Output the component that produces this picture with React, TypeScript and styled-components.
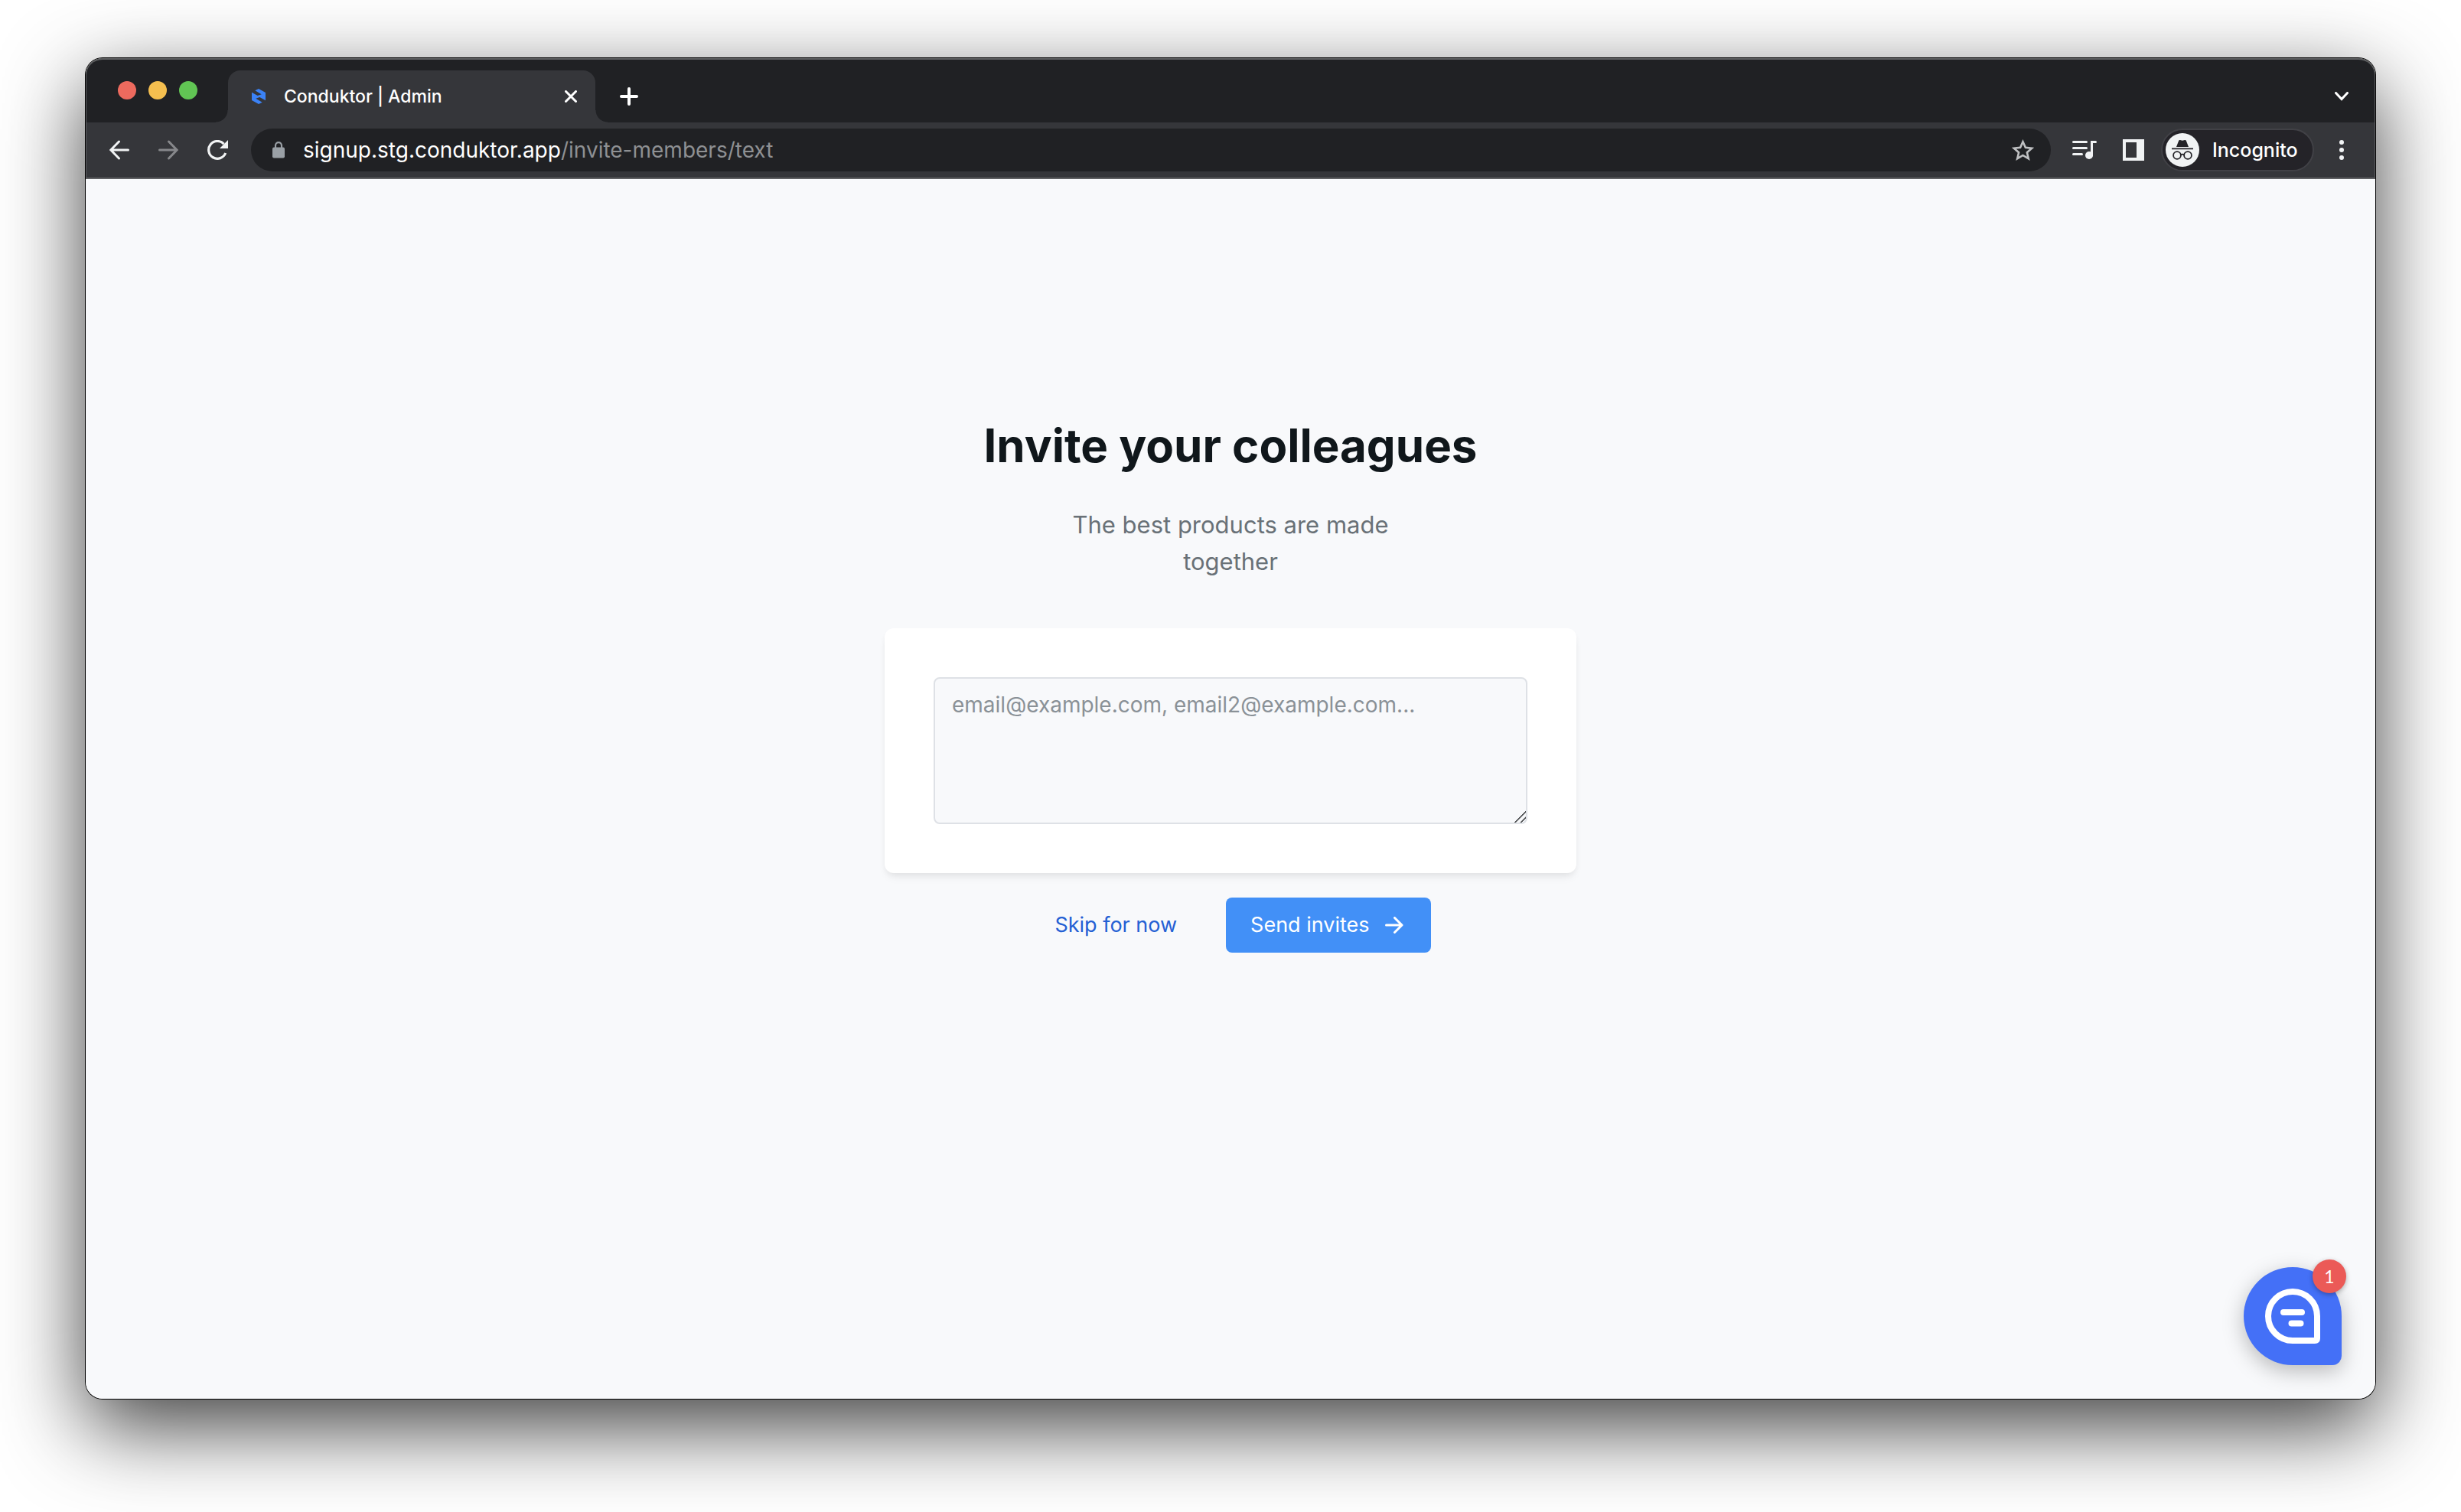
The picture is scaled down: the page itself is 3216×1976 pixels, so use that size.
import React from 'react';
import styled, { createGlobalStyle } from 'styled-components';

const GlobalStyle = createGlobalStyle`
  *, *::before, *::after { box-sizing: border-box; }
  body {
    margin: 0;
    background: #ffffff;
    font-family: Inter, "Liberation Sans", sans-serif;
  }
  button, textarea { font-family: inherit; }
  svg { display: block; flex: none; }
`;

const Desktop = styled.div`
  display: flex;
  min-height: 100vh;
  padding: 76px 112px 148px;
`;

const Window = styled.div`
  position: relative;
  flex: 1;
  display: flex;
  flex-direction: column;
  min-width: 0;
  border-radius: 22px;
  overflow: clip;
  background: #f8f9fb;
`;

const WindowShadow = styled.div`
  flex: 1;
  display: flex;
  min-width: 0;
  border-radius: 22px;
  box-shadow: 0 0 0 1px #000000, 0 36px 110px rgba(0, 0, 0, 0.76);
`;

const Chrome = styled.header`
  position: relative;
  &::after {
    content: '';
    position: absolute;
    inset: 0;
    border: solid #5f6062;
    border-width: 2px 1px 0;
    border-radius: 22px 22px 0 0;
    pointer-events: none;
  }
`;

const TabStrip = styled.div`
  display: flex;
  align-items: center;
  height: 84px;
  padding: 0 35px 0 42px;
  background: #202124;
`;

const TrafficLights = styled.div`
  display: flex;
  gap: 16px;
  margin-right: 40px;
`;

const Light = styled.button<{ $color: string }>`
  width: 24px;
  height: 24px;
  padding: 0;
  border: 0;
  border-radius: 50%;
  background: ${(p) => p.$color};
`;

const TabRow = styled.div`
  flex: 1;
  align-self: flex-end;
  display: flex;
  align-items: center;
  height: 68px;
`;

const Tab = styled.div`
  position: relative;
  display: flex;
  align-items: center;
  gap: 24px;
  width: 480px;
  height: 68px;
  margin-right: 32px;
  padding: 0 24px 0 31px;
  border-radius: 16px 16px 0 0;
  background: #35363a;
  color: #ffffff;
  font-size: 23px;
  line-height: 32px;
  &::before, &::after {
    content: '';
    position: absolute;
    bottom: 0;
    width: 16px;
    height: 16px;
  }
  &::before {
    right: 100%;
    background: radial-gradient(circle at 0 0, transparent 15px, #35363a 16px);
  }
  &::after {
    left: 100%;
    background: radial-gradient(circle at 100% 0, transparent 15px, #35363a 16px);
  }
`;

const TabTitle = styled.span`
  flex: 1;
  font-weight: 500;
  white-space: nowrap;
`;

const IconButton = styled.button<{ $tone?: string; $after?: number }>`
  display: flex;
  flex: none;
  margin: 0 ${(p) => p.$after ?? 0}px 0 0;
  padding: 0;
  border: 0;
  background: none;
  color: ${(p) => p.$tone ?? '#f1f3f4'};
`;

const Spacer = styled.div`
  flex: 1;
`;

const Toolbar = styled.div`
  display: flex;
  align-items: center;
  height: 74px;
  padding: 0 41px 0 31px;
  border-bottom: 2px solid #5f6063;
  background: #35363a;
`;

const Omnibox = styled.div`
  flex: 1;
  display: flex;
  align-items: center;
  min-width: 0;
  height: 56px;
  margin-right: 28px;
  padding: 0 22px 0 28px;
  border-radius: 28px;
  background: #202124;
`;

const Address = styled.button`
  flex: 1;
  margin-left: 24px;
  padding: 0;
  border: 0;
  background: none;
  color: #8e9093;
  font-size: 28px;
  line-height: 40px;
  text-align: left;
  white-space: nowrap;
`;

const Domain = styled.span`
  color: #ffffff;
`;

const Profile = styled.button`
  display: flex;
  align-items: center;
  gap: 17px;
  width: 200px;
  height: 56px;
  margin: 0 33px 0 22px;
  padding: 0 4px;
  border: 2px solid #414146;
  border-radius: 28px;
  background: #242328;
  color: #ffffff;
  font-size: 25px;
  line-height: 32px;
  font-weight: 500;
`;

const Page = styled.main`
  flex: 1;
  display: flex;
  flex-direction: column;
  align-items: center;
  padding: 308px 32px 64px;
`;

const Title = styled.h1`
  margin: 0 0 40px;
  color: #10171b;
  font-size: 60px;
  line-height: 80px;
  font-weight: 700;
  text-align: center;
`;

const Subtitle = styled.p`
  max-width: 448px;
  margin: 0 0 63px;
  color: #697177;
  font-size: 31px;
  line-height: 48px;
  text-align: center;
`;

const Form = styled.form`
  width: 100%;
  max-width: 904px;
`;

const Card = styled.div`
  padding: 64px;
  border-radius: 12px;
  background: #ffffff;
  box-shadow: 0 8px 12px -2px rgba(0, 0, 0, 0.05), 0 4px 8px -2px rgba(0, 0, 0, 0.06);
`;

const Emails = styled.textarea`
  display: block;
  width: 100%;
  height: 192px;
  padding: 14px 22px;
  border: 2px solid #dee1e6;
  border-radius: 8px;
  outline: 0;
  background: #f8f9fb;
  color: #10171b;
  font-size: 28px;
  line-height: 40px;
  resize: both;
  &::placeholder { color: #8a9197; opacity: 1; }
  &::-webkit-resizer {
    background: linear-gradient(
      135deg,
      transparent 49%, #4f5153 50%, #4f5153 56%,
      transparent 57%, transparent 73%,
      #4f5153 74%, #4f5153 80%, transparent 81%
    );
  }
`;

const Actions = styled.div`
  display: flex;
  justify-content: center;
  gap: 32px;
  margin-top: 32px;
`;

const ActionButton = styled.button<{ $primary?: boolean }>`
  display: flex;
  align-items: center;
  gap: 20px;
  height: 72px;
  padding: 0 ${(p) => (p.$primary ? 36 : 32)}px 0 32px;
  border: 0;
  border-radius: 8px;
  background: ${(p) => (p.$primary ? '#4290f7' : 'transparent')};
  color: ${(p) => (p.$primary ? '#ffffff' : '#2460d4')};
  font-size: 27px;
  line-height: 40px;
`;

const Chat = styled.button`
  position: absolute;
  right: 44px;
  bottom: 44px;
  display: grid;
  place-items: center;
  width: 128px;
  height: 128px;
  padding: 0;
  border: 0;
  border-radius: 64px 64px 12px 64px;
  background: #4470f7;
  box-shadow: 0 8px 28px rgba(0, 0, 0, 0.26);
`;

const Badge = styled.span`
  position: absolute;
  top: -10px;
  right: -6px;
  width: 44px;
  height: 44px;
  border-radius: 50%;
  background: #eb5a57;
  box-shadow: 0 2px 6px rgba(0, 0, 0, 0.3);
  color: #ffffff;
  font-family: Lato, sans-serif;
  font-size: 23px;
  line-height: 44px;
  text-align: center;
`;

const Favicon = () => (
  <svg width="18" height="20" viewBox="0 0 54 60" fill="#3b82f6" aria-hidden="true">
    <path d="M13 7 27 0 54 15V46L31 33 16 38 41 53 27 60 0 45V14L23 27 38 22Z" />
  </svg>
);

const Close = () => (
  <svg width="16" height="16" viewBox="0 0 16 16" stroke="currentColor" strokeWidth="3" strokeLinecap="round">
    <path d="M1.5 1.5 14.5 14.5M14.5 1.5 1.5 14.5" />
  </svg>
);

const Plus = () => (
  <svg width="24" height="24" viewBox="0 0 24 24" stroke="currentColor" strokeWidth="4" strokeLinecap="round">
    <path d="M12 2V22M2 12H22" />
  </svg>
);

const Chevron = () => (
  <svg width="18" height="12" viewBox="0 0 18 12" fill="none" stroke="currentColor" strokeWidth="3" strokeLinecap="round">
    <path d="M1.5 1.5 9 9.5 16.5 1.5" />
  </svg>
);

const Back = () => (
  <svg width="26" height="26" viewBox="0 0 26 26" fill="none" stroke="currentColor" strokeWidth="3" strokeLinecap="round">
    <path d="M24.5 13H2M12.5 2 1.8 13 12.5 24" />
  </svg>
);

const Forward = () => (
  <svg width="26" height="26" viewBox="0 0 26 26" fill="none" stroke="currentColor" strokeWidth="3" strokeLinecap="round">
    <path d="M1.5 13H24M13.5 2 24.2 13 13.5 24" />
  </svg>
);

const Reload = () => (
  <svg width="27" height="26" viewBox="0 0 27 26">
    <path d="M23.7 17A11.4 11.4 0 1 1 21.5 5.2" fill="none" stroke="currentColor" strokeWidth="3.2" />
    <path d="M27 0V11H16Z" fill="currentColor" />
  </svg>
);

const Lock = () => (
  <svg width="16" height="22" viewBox="0 0 16 22" aria-hidden="true">
    <path d="M4 9V5.200a4 4 0 0 1 8 0V9" fill="none" stroke="#9aa0a6" strokeWidth="2.200" />
    <rect y="7.500" width="16" height="14" rx="2" fill="#9aa0a6" />
  </svg>
);

const Star = () => (
  <svg width="29" height="29" viewBox="0 0 29 29" fill="none" stroke="currentColor" strokeWidth="2.600">
    <path d="M14.500 3.200 17.900 10.900 26.200 11.700 19.900 17.200 21.800 25.400 14.500 21 7.200 25.400 9.100 17.200 2.800 11.700 11.100 10.900Z" />
  </svg>
);

const Queue = () => (
  <svg width="32" height="24" viewBox="0 0 32 24" stroke="currentColor" strokeWidth="3" strokeLinecap="round" fill="none">
    <path d="M1.500 1.500H18.500M1.500 9.500H18.500M1.500 17.500H12.500" />
    <path d="M25.500 19V1.500H30.500" />
    <circle cx="22" cy="19" r="5" fill="currentColor" stroke="none" />
  </svg>
);

const SidePanel = () => (
  <svg width="28" height="28" viewBox="0 0 28 28" fill="currentColor" fillRule="evenodd">
    <path d="M0 0H28V28H0ZM4 4V24H18V4Z" />
  </svg>
);

const Incognito = () => (
  <svg width="44" height="44" viewBox="0 0 44 44" aria-hidden="true">
    <circle cx="22" cy="22" r="22" fill="#f1f3f4" />
    <path d="M14 18 17.200 9.800Q17.700 8.600 19 9L22 9.800 25 9Q26.300 8.600 26.800 9.800L30 18Z" fill="#242328" />
    <g fill="none" stroke="#242328" strokeWidth="1.800">
      <path d="M8 20.300H36M19.800 28.400Q22 26.800 24.200 28.400" />
      <circle cx="15" cy="29" r="4.900" />
      <circle cx="29" cy="29" r="4.900" />
    </g>
  </svg>
);

const Dots = () => (
  <svg width="6" height="26" viewBox="0 0 6 26" fill="currentColor">
    <circle cx="3" cy="3" r="3" />
    <circle cx="3" cy="13" r="3" />
    <circle cx="3" cy="23" r="3" />
  </svg>
);

const SendArrow = () => (
  <svg width="24" height="22" viewBox="0 0 24 22" fill="none" stroke="currentColor" strokeWidth="3" strokeLinecap="round" strokeLinejoin="round" aria-hidden="true">
    <path d="M1.500 11H22M12.500 1.500 22 11 12.500 20.500" />
  </svg>
);

const ChatIcon = () => (
  <svg width="72" height="72" viewBox="0 0 72 72" fill="none" stroke="#ffffff" strokeWidth="8" strokeLinecap="round" aria-hidden="true">
    <path d="M36 4A32 32 0 0 1 68 36V65Q68 68 65 68H36A32 32 0 0 1 36 4Z" />
    <path d="M24 31H48M34.500 45.500H46.500" />
  </svg>
);

export default function App() {
  return (
    <>
      <GlobalStyle />
      <Desktop>
        <WindowShadow>
          <Window>
            <Chrome>
              <TabStrip>
                <TrafficLights>
                  <Light $color="#ed6a5e" aria-label="Close window" />
                  <Light $color="#f5bf4f" aria-label="Minimize window" />
                  <Light $color="#61c554" aria-label="Zoom window" />
                </TrafficLights>
                <TabRow>
                  <Tab>
                    <Favicon />
                    <TabTitle>Conduktor | Admin</TabTitle>
                    <IconButton $tone="#ffffff" aria-label="Close tab"><Close /></IconButton>
                  </Tab>
                  <IconButton $tone="#ffffff" aria-label="New tab"><Plus /></IconButton>
                  <Spacer />
                  <IconButton $tone="#ffffff" aria-label="Search tabs"><Chevron /></IconButton>
                </TabRow>
              </TabStrip>
              <Toolbar>
                <IconButton $after={38} aria-label="Back"><Back /></IconButton>
                <IconButton $after={38} $tone="#87888b" aria-label="Forward"><Forward /></IconButton>
                <IconButton $after={30} aria-label="Reload"><Reload /></IconButton>
                <Omnibox>
                  <Lock />
                  <Address>
                    <Domain>signup.stg.conduktor.app</Domain>/invite-members/text
                  </Address>
                  <IconButton $tone="#bfc0c2" aria-label="Bookmark this page"><Star /></IconButton>
                </Omnibox>
                <IconButton $after={34} aria-label="Media controls"><Queue /></IconButton>
                <IconButton aria-label="Side panel"><SidePanel /></IconButton>
                <Profile><Incognito />Incognito</Profile>
                <IconButton aria-label="Menu"><Dots /></IconButton>
              </Toolbar>
            </Chrome>
            <Page>
              <Title>Invite your colleagues</Title>
              <Subtitle>The best products are made together</Subtitle>
              <Form onSubmit={(e) => e.preventDefault()}>
                <Card>
                  <Emails aria-label="Email addresses" placeholder="email@example.com, email2@example.com..." />
                </Card>
                <Actions>
                  <ActionButton type="button">Skip for now</ActionButton>
                  <ActionButton $primary type="submit">Send invites<SendArrow /></ActionButton>
                </Actions>
              </Form>
            </Page>
            <Chat aria-label="Open chat">
              <ChatIcon />
              <Badge>1</Badge>
            </Chat>
          </Window>
        </WindowShadow>
      </Desktop>
    </>
  );
}
